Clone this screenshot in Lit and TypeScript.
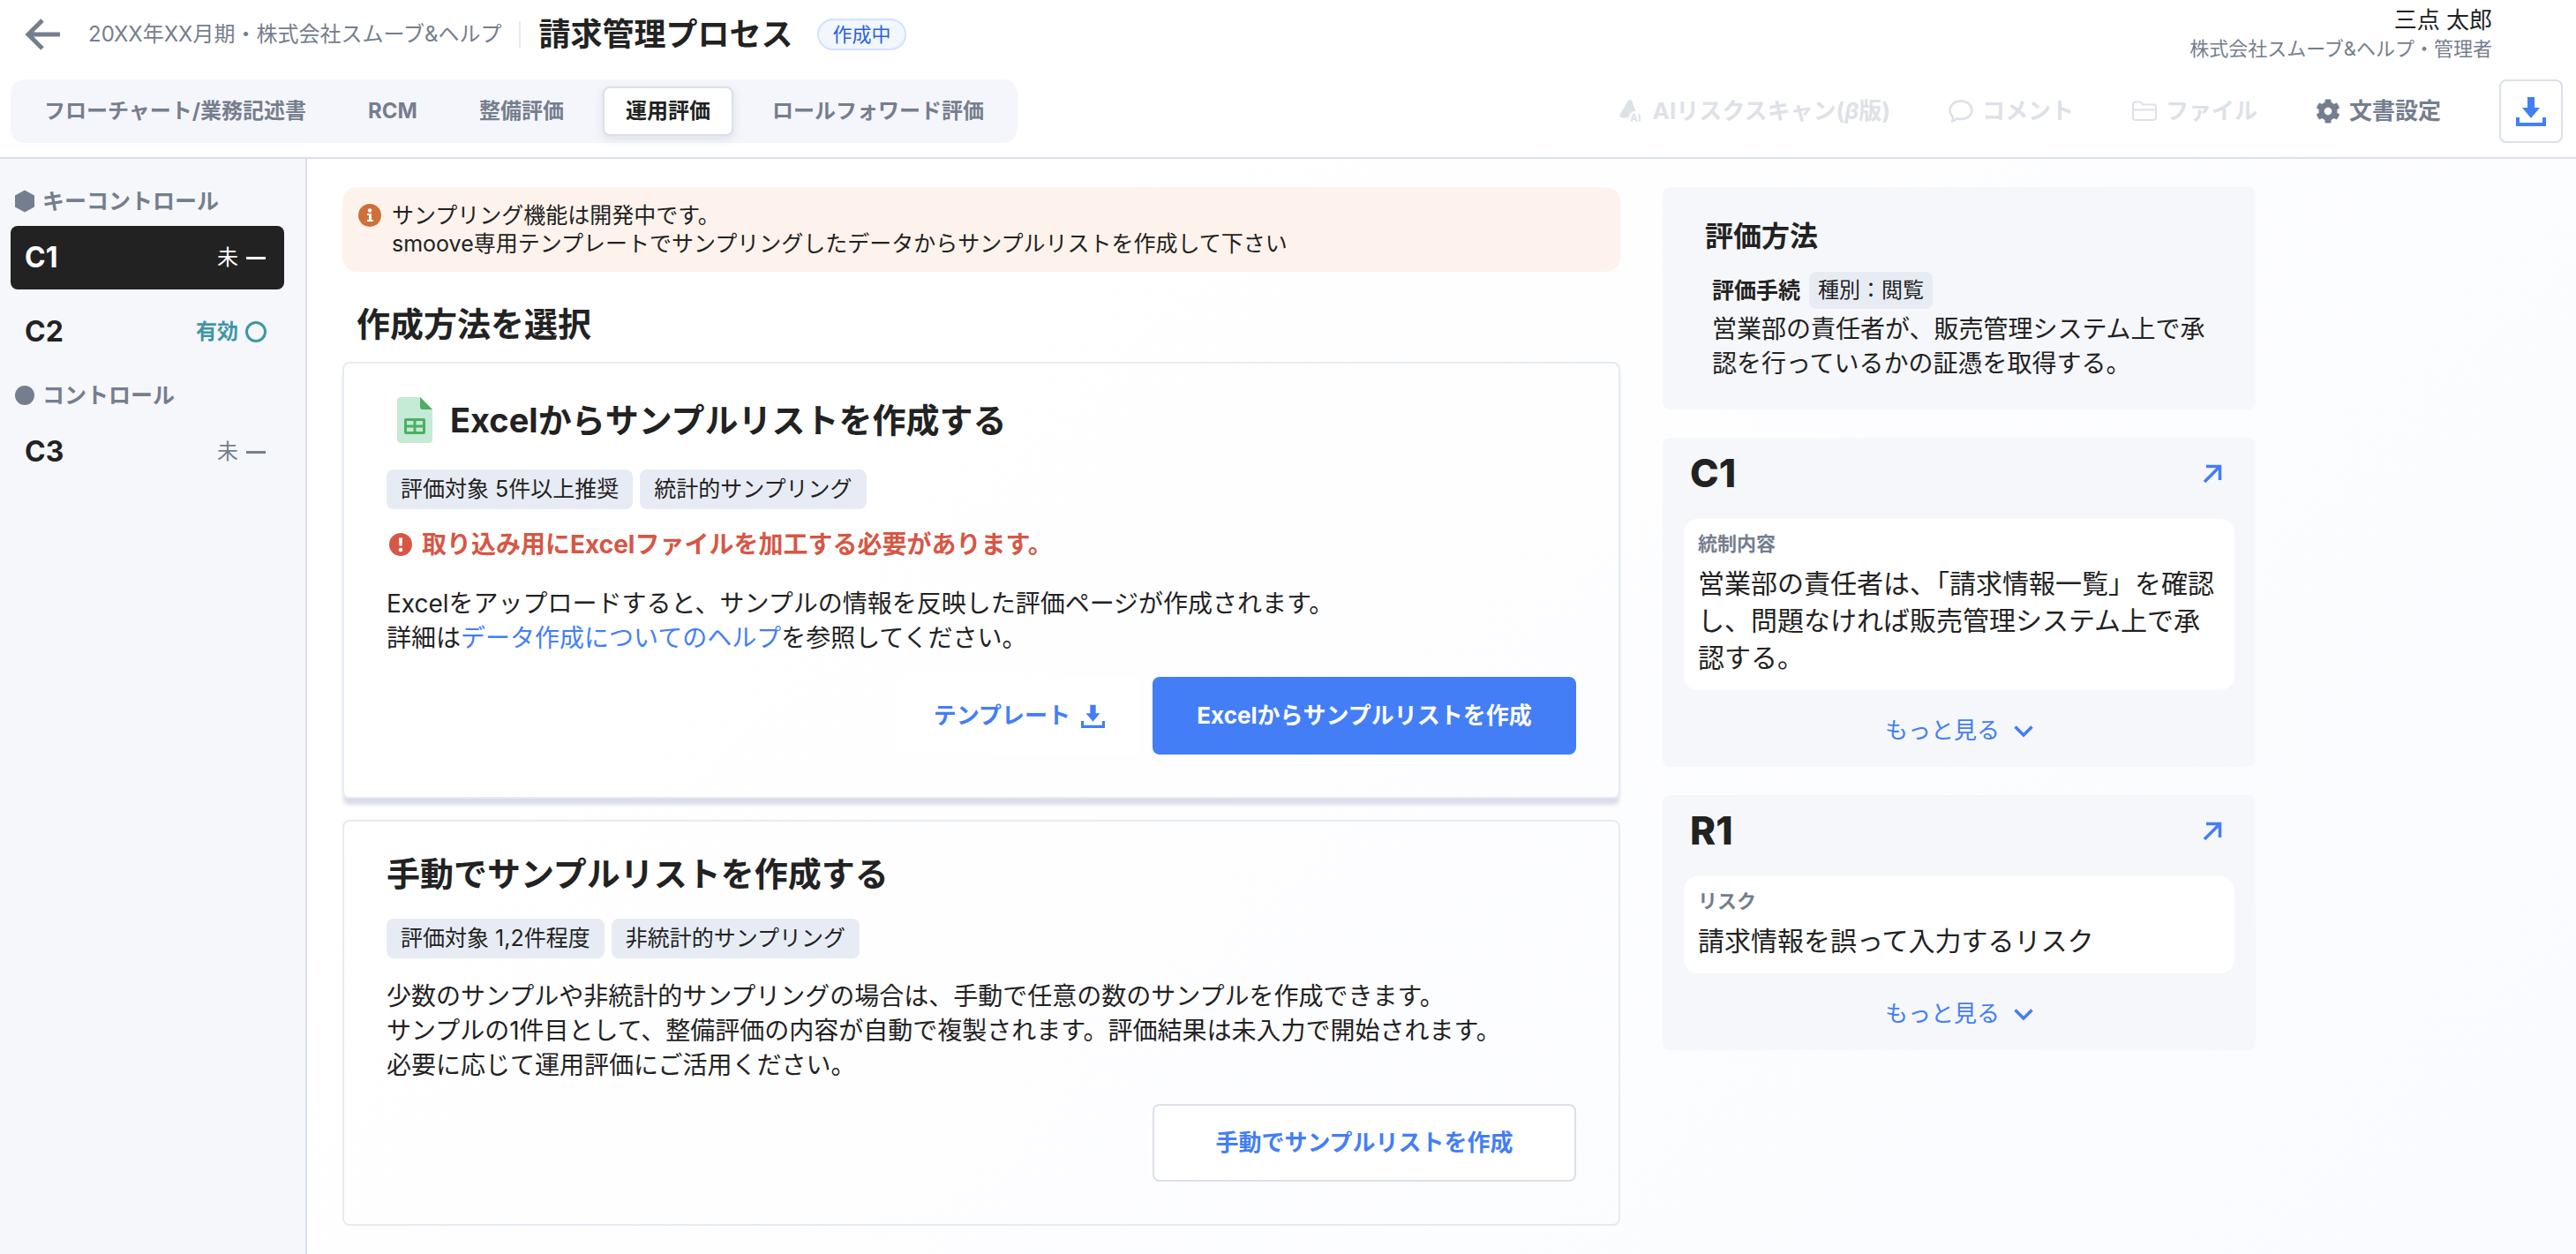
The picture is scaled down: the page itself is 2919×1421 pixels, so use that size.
import { LitElement, html, css, svg, nothing } from "lit";
import { customElement, property, state } from "lit/decorators.js";
import { classMap } from "lit/directives/class-map.js";

const fonts = css`
  :host {
    font-family: "Inter", "Noto Sans CJK JP", sans-serif;
    color: #222222;
    box-sizing: border-box;
  }
  * {
    box-sizing: border-box;
  }
  h1,
  h2,
  h3,
  p,
  ul {
    margin: 0;
    padding: 0;
  }
  button {
    font: inherit;
    line-height: 32px;
    color: inherit;
    background: none;
    border: 0;
    padding: 0;
    cursor: pointer;
  }
  a {
    color: #437ef7;
    text-decoration: none;
  }
  svg {
    display: block;
    flex: none;
    overflow: visible;
  }
`;

const downloadIcon = (size: number) => html`
  <svg width=${size} height=${size} viewBox="0 0 34 34" fill="currentColor" aria-hidden="true">
    <path d="M13 1h8v12h6L17 25 7 13h6z" />
    <path d="M0 24h4v6h26v-6h4v10H0z" />
  </svg>
`;

const icons = {
  back: svg`<svg width="40" height="36" viewBox="0 0 40 36" fill="none" stroke="currentColor" stroke-width="5"><path d="M40 18H4M20 2 4 18l16 16" /></svg>`,
  scan: svg`<svg width="28" height="28" viewBox="0 0 28 28" fill="currentColor"><path d="M12 1c1 0 2 .7 2.400 1.800L18.500 14c-4 0-6.500 2-7 4.500-.4 2-1.500 3-3.500 3H3c-2 0-3.300-1.600-2.600-3.500L9.500 2.800C10 1.700 11 1 12 1z" /><text x="12" y="26" font-size="12" font-weight="700" font-family="Inter, sans-serif">AI</text></svg>`,
  comment: svg`<svg width="28" height="28" viewBox="0 0 28 28" fill="none" stroke="currentColor" stroke-width="2.500" stroke-linejoin="round"><path d="M14 2.500c7 0 12.500 4.500 12.500 10.200S21 23 14 23c-1.800 0-3.400-.3-4.900-.8-1.300 1.700-3 3-5.300 3.400 1-1.500 1.400-3.300 1.200-5.200-2.300-2-3.500-4.700-3.500-7.700C1.500 7 7 2.500 14 2.500z" /></svg>`,
  folder: svg`<svg width="28" height="28" viewBox="0 0 28 28" fill="none" stroke="currentColor" stroke-width="2" stroke-linejoin="round"><path d="M1 6.500c0-2 1-3 3-3h5.500l2.500 3h12c2 0 3 1 3 3v11.500c0 2-1 3-3 3H4c-2 0-3-1-3-3zM1 12.500h26" /></svg>`,
  gear: svg`<svg width="28" height="28" viewBox="0 0 512 512" fill="currentColor"><path d="M487.400 315.700l-42.600-24.600c4.300-23.200 4.300-47 0-70.200l42.600-24.600c4.900-2.800 7.100-8.600 5.500-14-11.100-35.600-30-67.800-54.700-94.600-3.800-4.100-10-5.100-14.800-2.300L380.800 110c-17.900-15.400-38.500-27.300-60.800-35.100V25.800c0-5.600-3.900-10.500-9.400-11.700-36.700-8.200-74.300-7.800-109.200 0-5.500 1.200-9.400 6.100-9.400 11.700V75c-22.200 7.900-42.800 19.800-60.800 35.100L88.700 85.500c-4.900-2.800-11-1.900-14.800 2.300-24.700 26.700-43.600 58.900-54.700 94.600-1.700 5.400.6 11.200 5.500 14L67.300 221c-4.300 23.200-4.300 47 0 70.200l-42.600 24.600c-4.900 2.800-7.100 8.600-5.500 14 11.100 35.600 30 67.800 54.700 94.600 3.800 4.100 10 5.100 14.800 2.300l42.600-24.600c17.900 15.400 38.500 27.300 60.800 35.100v49.200c0 5.600 3.900 10.500 9.400 11.700 36.700 8.200 74.300 7.800 109.200 0 5.500-1.200 9.400-6.100 9.400-11.700v-49.200c22.200-7.900 42.800-19.800 60.800-35.100l42.600 24.600c4.900 2.800 11 1.900 14.800-2.300 24.700-26.700 43.600-58.900 54.700-94.600 1.500-5.500-.7-11.300-5.600-14.100zM256 336c-44.100 0-80-35.900-80-80s35.900-80 80-80 80 35.900 80 80-35.900 80-80 80z" /></svg>`,
  hexagon: svg`<svg width="22" height="26" viewBox="0 0 22 26" fill="currentColor"><path d="M11 .500 22 6.500v13L11 25.500 0 19.500v-13z" /></svg>`,
  circle: svg`<svg width="22" height="22" viewBox="0 0 22 22" fill="currentColor"><circle cx="11" cy="11" r="11" /></svg>`,
  dash: svg`<svg width="24" height="24" viewBox="0 0 24 24" fill="none" stroke="currentColor" stroke-width="3"><path d="M1 12.500h22" /></svg>`,
  ring: svg`<svg width="24" height="24" viewBox="0 0 24 24" fill="none" stroke="currentColor" stroke-width="3"><circle cx="12" cy="12" r="10.500" /></svg>`,
  info: svg`<svg width="26" height="26" viewBox="0 0 26 26"><circle cx="13" cy="13" r="13" fill="#cf6f39" /><path d="M10 11h5v7h2v2h-7v-2h2v-5h-2z" fill="#fff" /><circle cx="13" cy="7.500" r="2.200" fill="#fff" /></svg>`,
  alert: svg`<svg width="26" height="26" viewBox="0 0 26 26"><circle cx="13" cy="13" r="13" fill="#d65745" /><path d="M11 5.500h4l-.4 9h-3.200z" fill="#fff" /><circle cx="13" cy="19" r="2.300" fill="#fff" /></svg>`,
  sheet: svg`<svg width="40" height="52" viewBox="0 0 40 52"><path d="M4 0h22l14 14v34a4 4 0 0 1-4 4H4a4 4 0 0 1-4-4V4a4 4 0 0 1 4-4z" fill="#c5ead6" /><path d="M26 0l14 14H29a3 3 0 0 1-3-3z" fill="#4caf63" /><rect x="8" y="24" width="24" height="18" rx="2" fill="#4caf63" /><path d="M11 27h7.500v4.500H11zM21.500 27H29v4.500h-7.500zM11 34.500h7.500V39H11zM21.500 34.500H29V39h-7.500z" fill="#c5ead6" /></svg>`,
  open: svg`<svg width="22" height="22" viewBox="0 0 22 22" fill="none" stroke="currentColor" stroke-width="3.500"><path d="M4 3.500h15.500V19M19.500 3.500 2 21" /></svg>`,
  chevron: svg`<svg width="22" height="14" viewBox="0 0 22 14" fill="none" stroke="currentColor" stroke-width="3.500"><path d="M1.500 2.500 11 12l9.500-9.500" /></svg>`,
};

@customElement("page-header")
class PageHeader extends LitElement {
  static styles = [
    fonts,
    css`
      :host {
        display: flex;
        flex-direction: column;
        height: 180px;
        padding: 7px 15px 16px 12px;
        justify-content: space-between;
        background: #ffffff;
        border-bottom: 2px solid #dbe0e8;
      }
      .row {
        display: flex;
        align-items: center;
        justify-content: space-between;
      }
      .crumbs {
        display: flex;
        align-items: center;
      }
      .back {
        color: #757e8e;
        margin: 0 32px 0 16px;
      }
      .period {
        font-size: 24px;
        color: #757e8e;
        padding-right: 20px;
        border-right: 2px solid #e7ebf1;
        line-height: 30px;
      }
      .title {
        font-size: 36px;
        line-height: 48px;
        margin: 0 28px 0 20px;
      }
      .status {
        font-size: 22px;
        line-height: 32px;
        padding: 0 15px;
        border: 2px solid #d3e2fb;
        border-radius: 18px;
        background: #f1f6ff;
        color: #2b62d9;
      }
      .user {
        text-align: right;
        padding-right: 80px;
      }
      .name {
        font-size: 26px;
        line-height: 32px;
      }
      .company {
        font-size: 22px;
        line-height: 32px;
        color: #757e8e;
      }
      .tabs {
        display: flex;
        gap: 18px;
        padding: 8px 12px;
        border-radius: 16px;
        background: #f5f6fb;
      }
      .tab {
        height: 56px;
        padding: 0 24px;
        border: 2px solid transparent;
        border-radius: 8px;
        font-size: 24px;
        font-weight: 700;
        color: #757e8e;
      }
      .tab.active {
        background: #ffffff;
        border-color: #dbe0e8;
        color: #222222;
        box-shadow: 0 4px 12px #dbe0e8;
      }
      .actions {
        display: flex;
        align-items: center;
        gap: 66px;
      }
      .action {
        display: flex;
        align-items: center;
        gap: 10px;
        font-size: 26px;
        font-weight: 700;
        color: #757e8e;
      }
      .action:disabled {
        color: #dde1e8;
      }
      .download {
        display: grid;
        place-items: center;
        width: 72px;
        height: 72px;
        border: 2px solid #dbe0e8;
        border-radius: 8px;
        color: #437ef7;
      }
    `,
  ];

  private tabs = ["フローチャート/業務記述書", "RCM", "整備評価", "運用評価", "ロールフォワード評価"];

  @state() private active = 3;

  render() {
    return html`
      <div class="row">
        <div class="crumbs">
          <button class="back" aria-label="戻る">${icons.back}</button>
          <span class="period">20XX年XX月期・株式会社スムーブ&amp;ヘルプ</span>
          <h1 class="title">請求管理プロセス</h1>
          <span class="status">作成中</span>
        </div>
        <div class="user">
          <div class="name">三点 太郎</div>
          <div class="company">株式会社スムーブ&amp;ヘルプ・管理者</div>
        </div>
      </div>
      <div class="row">
        <nav class="tabs">
          ${this.tabs.map(
            (tab, i) => html`<button
              class=${classMap({ tab: true, active: i === this.active })}
              @click=${() => (this.active = i)}
            >${tab}</button>`,
          )}
        </nav>
        <div class="actions">
          <button class="action" disabled>${icons.scan}<span>AIリスクスキャン(<em>β</em>版)</span></button>
          <button class="action" disabled>${icons.comment}コメント</button>
          <button class="action" disabled>${icons.folder}ファイル</button>
          <button class="action">${icons.gear}文書設定</button>
          <button class="download" aria-label="ダウンロード">${downloadIcon(34)}</button>
        </div>
      </div>
    `;
  }
}

type Control = { id: string; status: string; effective?: boolean };

@customElement("control-nav")
class ControlNav extends LitElement {
  static styles = [
    fonts,
    css`
      :host {
        display: flex;
        flex-direction: column;
        gap: 20px;
        padding: 32px 24px 32px 12px;
        background: #f5f7fb;
        border-right: 2px solid #d9dee8;
      }
      .group {
        display: flex;
        flex-direction: column;
        gap: 12px;
      }
      .heading {
        display: flex;
        align-items: center;
        gap: 9px;
        padding-left: 5px;
        font-size: 25px;
        font-weight: 700;
        line-height: 32px;
        color: #757e8e;
      }
      .item {
        display: flex;
        align-items: center;
        justify-content: space-between;
        height: 72px;
        padding: 0 20px 0 16px;
        border-radius: 8px;
      }
      .item.selected {
        background: #222222;
        color: #ffffff;
      }
      .code {
        font-size: 32px;
        font-weight: 700;
      }
      .status {
        display: flex;
        align-items: center;
        gap: 8px;
        font-size: 24px;
        color: #757e8e;
      }
      .selected .status {
        color: inherit;
      }
      .status.effective {
        color: #4096a6;
        font-weight: 700;
      }
    `,
  ];

  @state() private selected = "C1";

  private group(icon: unknown, label: string, items: Control[]) {
    return html`
      <section class="group">
        <h2 class="heading">${icon}${label}</h2>
        ${items.map(
          (c) => html`<button
            class=${classMap({ item: true, selected: c.id === this.selected })}
            @click=${() => (this.selected = c.id)}
          >
            <span class="code">${c.id}</span>
            <span class=${classMap({ status: true, effective: !!c.effective })}
              >${c.status}${c.effective ? icons.ring : icons.dash}</span
            >
          </button>`,
        )}
      </section>
    `;
  }

  render() {
    return html`
      ${this.group(icons.hexagon, "キーコントロール", [
        { id: "C1", status: "未" },
        { id: "C2", status: "有効", effective: true },
      ])}
      ${this.group(icons.circle, "コントロール", [{ id: "C3", status: "未" }])}
    `;
  }
}

@customElement("method-card")
class MethodCard extends LitElement {
  static styles = [
    fonts,
    css`
      :host {
        display: block;
        padding: 36px 48px 48px;
        border: 2px solid #e6ebf2;
        border-radius: 8px;
      }
      :host([raised]) {
        box-shadow: 0 8px 4px -1px #d8dde7;
      }
      .title {
        display: flex;
        align-items: center;
        font-size: 38px;
        line-height: 46px;
      }
      .icon {
        display: grid;
        place-items: center;
        width: 64px;
        height: 56px;
        margin-right: 8px;
      }
      .tags {
        display: flex;
        flex-wrap: wrap;
        gap: 8px;
        margin-top: 28px;
      }
      .tag {
        padding: 8px 16px;
        border-radius: 8px;
        background: #e7ecf4;
        font-size: 25px;
        line-height: 29px;
      }
    `,
  ];

  @property() heading = "";
  @property({ type: Boolean }) sheet = false;
  @property({ type: Boolean, reflect: true }) raised = false;
  @property({ attribute: false }) tags: string[] = [];

  render() {
    return html`
      <h3 class="title">
        ${this.sheet ? html`<span class="icon">${icons.sheet}</span>` : nothing}${this.heading}
      </h3>
      <div class="tags">${this.tags.map((t) => html`<span class="tag">${t}</span>`)}</div>
      <slot></slot>
    `;
  }
}

@customElement("reference-card")
class ReferenceCard extends LitElement {
  static styles = [
    fonts,
    css`
      :host {
        display: flex;
        flex-direction: column;
        padding: 16px 24px 18px;
        border-radius: 8px;
        background: #f5f7fb;
      }
      .head {
        display: flex;
        align-items: center;
        justify-content: space-between;
        padding: 0 14px 0 7px;
        margin-bottom: 28px;
      }
      .code {
        font-size: 44px;
        font-weight: 800;
        line-height: 48px;
      }
      .box {
        padding: 12px 16px 16px;
        border-radius: 16px;
        background: #ffffff;
      }
      .label {
        font-size: 22px;
        font-weight: 700;
        line-height: 32px;
        color: #757e8e;
        margin-bottom: 8px;
      }
      .text {
        font-size: 30px;
        line-height: 42px;
      }
      .more {
        display: flex;
        align-items: center;
        align-self: center;
        gap: 16px;
        height: 46px;
        margin-top: 23px;
        font-size: 26px;
        color: #437ef7;
      }
    `,
  ];

  @property() code = "";
  @property() label = "";
  @property() text = "";

  render() {
    return html`
      <div class="head">
        <h2 class="code">${this.code}</h2>
        <a href="#" aria-label=${this.code}>${icons.open}</a>
      </div>
      <div class="box">
        <h3 class="label">${this.label}</h3>
        <p class="text">${this.text}</p>
      </div>
      <button class="more">もっと見る${icons.chevron}</button>
    `;
  }
}

@customElement("app-root")
class AppRoot extends LitElement {
  static styles = [
    fonts,
    css`
      :host {
        display: flex;
        flex-direction: column;
        min-height: 100vh;
        background: #ffffff;
      }
      .body {
        flex: 1;
        display: grid;
        grid-template-columns: 348px minmax(0, 1fr);
      }
      .content {
        display: grid;
        grid-template-columns: minmax(0, 1448px) minmax(0, 672px);
        gap: 48px;
        align-items: start;
        padding: 32px 40px;
        background: linear-gradient(135deg, #ffffff 20%, #fafbff);
      }
      .notice {
        display: flex;
        gap: 12px;
        padding: 16px 18px;
        border-radius: 16px;
        background: #fdf3ec;
        font-size: 25px;
        line-height: 32px;
      }
      .notice svg {
        margin-top: 3px;
      }
      .section {
        margin: 36px 0 20px 16px;
        font-size: 38px;
        line-height: 46px;
      }
      .cards,
      .aside {
        display: flex;
        flex-direction: column;
        gap: 24px;
      }
      .aside {
        gap: 32px;
      }
      .warning {
        display: flex;
        align-items: center;
        gap: 11px;
        margin: 20px 0 28px 3px;
        font-size: 28px;
        font-weight: 700;
        line-height: 40px;
        color: #d65745;
      }
      .text {
        font-size: 28px;
        line-height: 39px;
      }
      .manual {
        margin-top: 24px;
      }
      .buttons {
        display: flex;
        justify-content: flex-end;
        gap: 16px;
        margin-top: 24px;
      }
      .button {
        display: flex;
        align-items: center;
        justify-content: center;
        gap: 12px;
        height: 88px;
        padding: 0 38px;
        border-radius: 8px;
        background: #ffffff;
        font-size: 26px;
        font-weight: 700;
        color: #437ef7;
      }
      .wide {
        min-width: 480px;
      }
      .primary {
        background: #437ef7;
        color: #ffffff;
      }
      .outlined {
        border: 2px solid #dbe0e8;
      }
      .method {
        padding: 32px 48px;
        border-radius: 8px;
        background: #f5f7fb;
      }
      .method-title {
        font-size: 32px;
        line-height: 48px;
      }
      .method-body {
        padding-left: 8px;
      }
      .procedure {
        display: flex;
        align-items: center;
        gap: 10px;
        margin: 16px 0 4px;
      }
      .procedure-name {
        font-size: 25px;
        line-height: 32px;
      }
      .kind {
        padding: 0 10px;
        border-radius: 8px;
        background: #e7ecf4;
        font-size: 24px;
        line-height: 42px;
      }
    `,
  ];

  render() {
    return html`
      <page-header></page-header>
      <div class="body">
        <control-nav></control-nav>
        <main class="content">
          <div>
            <div class="notice" role="status">
              ${icons.info}
              <p>
                サンプリング機能は開発中です。<br />smoove専用テンプレートでサンプリングしたデータからサンプルリストを作成して下さい
              </p>
            </div>
            <h2 class="section">作成方法を選択</h2>
            <div class="cards">
              <method-card
                raised
                sheet
                heading="Excelからサンプルリストを作成する"
                .tags=${["評価対象 5件以上推奨", "統計的サンプリング"]}
              >
                <p class="warning">${icons.alert}取り込み用にExcelファイルを加工する必要があります。</p>
                <p class="text">
                  Excelをアップロードすると、サンプルの情報を反映した評価ページが作成されます。<br />詳細は<a
                    href="#"
                    >データ作成についてのヘルプ</a
                  >を参照してください。
                </p>
                <div class="buttons">
                  <button class="button">テンプレート${downloadIcon(27)}</button>
                  <button class="button wide primary">Excelからサンプルリストを作成</button>
                </div>
              </method-card>
              <method-card
                heading="手動でサンプルリストを作成する"
                .tags=${["評価対象 1,2件程度", "非統計的サンプリング"]}
              >
                <p class="text manual">
                  少数のサンプルや非統計的サンプリングの場合は、手動で任意の数のサンプルを作成できます。<br />サンプルの1件目として、整備評価の内容が自動で複製されます。評価結果は未入力で開始されます。<br />必要に応じて運用評価にご活用ください。
                </p>
                <div class="buttons">
                  <button class="button wide outlined">手動でサンプルリストを作成</button>
                </div>
              </method-card>
            </div>
          </div>
          <aside class="aside">
            <section class="method">
              <h2 class="method-title">評価方法</h2>
              <div class="method-body">
                <div class="procedure">
                  <h3 class="procedure-name">評価手続</h3>
                  <span class="kind">種別：閲覧</span>
                </div>
                <p class="text">営業部の責任者が、販売管理システム上で承認を行っているかの証憑を取得する。</p>
              </div>
            </section>
            <reference-card
              code="C1"
              label="統制内容"
              text="営業部の責任者は、「請求情報一覧」を確認し、問題なければ販売管理システム上で承認する。"
            ></reference-card>
            <reference-card code="R1" label="リスク" text="請求情報を誤って入力するリスク"></reference-card>
          </aside>
        </main>
      </div>
    `;
  }
}
